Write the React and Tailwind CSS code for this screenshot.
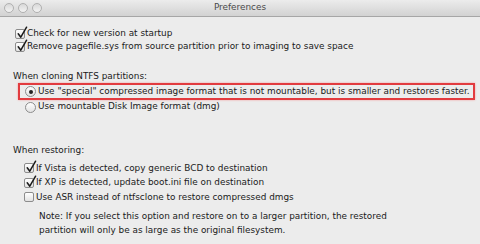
function Check({ checked }) {
  return (
    <span className="relative inline-block w-[10px] h-[10px] shrink-0 rounded-[2px] border border-[#8c8c8c] bg-gradient-to-b from-white to-[#e2e2e2]">
      {checked && (
        <svg className="absolute -top-[4px] left-[1px]" width="11" height="13" viewBox="0 0 11 13">
          <path d="M1.2 7.8 L3.8 11.2 L9.6 1.2" fill="none" stroke="#1a1a1a" strokeWidth="1.5" strokeLinecap="round" strokeLinejoin="round" />
        </svg>
      )}
    </span>
  )
}

function Radio({ on }) {
  return (
    <span className="inline-flex items-center justify-center w-[11px] h-[11px] shrink-0 rounded-full border border-[#8c8c8c] bg-gradient-to-b from-white to-[#e2e2e2]">
      {on && <span className="w-[4px] h-[4px] rounded-full bg-[#222]" />}
    </span>
  )
}

function Row({ children, className = '' }) {
  return <div className={`flex items-center whitespace-nowrap ${className}`}>{children}</div>
}

export default function App() {
  return (
    <div className="w-[480px] h-[244px] bg-[#ececec] text-[8.9px] text-[#1a1a1a] overflow-hidden font-['DejaVu_Sans',Verdana,sans-serif]">
      <div className="relative h-[17px] bg-gradient-to-b from-[#ececec] to-[#d2d2d2] border-b border-[#a6a6a6] flex items-center justify-center">
        <div className="absolute left-[4px] top-[3px] flex gap-[4px]">
          {[0, 1, 2].map(i => (
            <span key={i} className="w-[10px] h-[10px] rounded-full border border-[#b0b0b0] bg-gradient-to-b from-[#d8d8d8] to-[#f3f3f3]" />
          ))}
        </div>
        <span className="text-[#4a4a4a]">Preferences</span>
      </div>

      <div className="pl-[15px] pt-[10px]">
        <Row className="h-[13px] gap-[2px]"><Check checked /><span>Check for new version at startup</span></Row>
        <Row className="h-[13px] gap-[2px]"><Check checked /><span>Remove pagefile.sys from source partition prior to imaging to save space</span></Row>
      </div>

      <div className="pl-[13px] mt-[17px]">
        <Row className="h-[13px]">When cloning NTFS partitions:</Row>
        <div className="ml-[5px] mr-[5px] h-[17px] border-2 border-[#e23b3f] shadow-[0_0_2px_#f3a0a0] flex items-center gap-[2px] pl-[5px] whitespace-nowrap">
          <Radio on /><span>Use "special" compressed image format that is not mountable, but is smaller and restores faster.</span>
        </div>
        <Row className="h-[14px] gap-[2px] pl-[12px]"><Radio /><span>Use mountable Disk Image format (dmg)</span></Row>
      </div>

      <div className="pl-[13px] mt-[30px]">
        <Row className="h-[13px]">When restoring:</Row>
        <div className="pl-[11px] mt-[4px] flex flex-col">
          <Row className="h-[14.5px] gap-[2px]"><Check checked /><span>If Vista is detected, copy generic BCD to destination</span></Row>
          <Row className="h-[14.5px] gap-[2px]"><Check checked /><span>If XP is detected, update boot.ini file on destination</span></Row>
          <Row className="h-[14.5px] gap-[2px]"><Check /><span>Use ASR instead of ntfsclone to restore compressed dmgs</span></Row>
        </div>
        <div className="pl-[26px] mt-[4px] leading-[14px]">
          <div>Note: If you select this option and restore on to a larger partition, the restored</div>
          <div>partition will only be as large as the original filesystem.</div>
        </div>
      </div>
    </div>
  )
}
